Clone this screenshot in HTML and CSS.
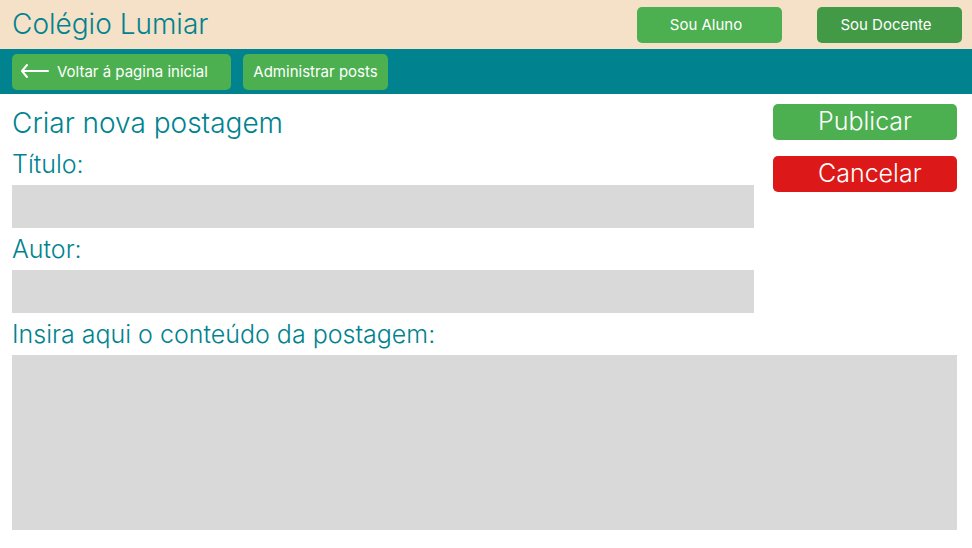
FILE: index.html
```html
<!DOCTYPE html>
<html lang="pt-BR">
<head>
<meta charset="utf-8">
<meta name="viewport" content="width=device-width, initial-scale=1">
<title>Colégio Lumiar</title>
<link rel="stylesheet" href="styles.css">
</head>
<body>
<header class="topbar">
  <span class="brand">Colégio Lumiar</span>
  <div class="roles">
    <button type="button" class="btn btn-role">Sou Aluno</button>
    <button type="button" class="btn btn-role btn-active">Sou Docente</button>
  </div>
</header>
<nav class="navbar">
  <a class="btn btn-back" href="#">
    <svg class="arrow" viewBox="0 0 30 16" aria-hidden="true"><path d="M28 8H2M7 2L2 8L7 14"/></svg>
    Voltar á pagina inicial
  </a>
  <a class="btn" href="#">Administrar posts</a>
</nav>
<main>
  <form class="editor">
    <div class="fields">
      <h1>Criar nova postagem</h1>
      <label for="titulo">Título:</label>
      <input id="titulo" type="text">
      <label for="autor">Autor:</label>
      <input id="autor" type="text">
    </div>
    <div class="actions">
      <button type="submit" class="btn btn-large">Publicar</button>
      <button type="button" class="btn btn-large btn-cancel">Cancelar</button>
    </div>
    <div class="content">
      <label for="conteudo">Insira aqui o conteúdo da postagem:</label>
      <textarea id="conteudo"></textarea>
    </div>
  </form>
</main>
</body>
</html>
```
FILE: styles.css
```css
* {
  box-sizing: border-box;
}

body {
  margin: 0;
  background: #fff;
  color: #00838f;
  font-family: Inter, "Liberation Sans", sans-serif;
  font-weight: 350;
}

.topbar {
  display: flex;
  align-items: center;
  justify-content: space-between;
  padding: 7px 10px 6px 12px;
  background: #f5e1c8;
}

.brand,
h1 {
  font-size: 28px;
  font-weight: 350;
  line-height: 34px;
}

.brand {
  padding-bottom: 2px;
}

.roles {
  display: flex;
  gap: 35px;
}

.btn {
  display: flex;
  align-items: center;
  justify-content: center;
  width: 145px;
  height: 36px;
  padding: 0 0 2px;
  border: 0;
  border-radius: 5px;
  background: #4caf50;
  color: #fff;
  font-family: inherit;
  font-size: 15px;
  font-weight: 400;
  text-decoration: none;
  cursor: pointer;
}

.btn-role {
  padding-right: 7px;
}

.btn-active {
  background: #439a46;
}

.navbar {
  display: flex;
  gap: 12px;
  padding: 5px 12px 4px;
  background: #00838f;
}

.btn-back {
  justify-content: flex-start;
  gap: 7px;
  width: 219px;
  padding-left: 8px;
}

.arrow {
  width: 30px;
  height: 16px;
  fill: none;
  stroke: #fff;
  stroke-width: 2;
  stroke-linecap: round;
  stroke-linejoin: round;
}

.editor {
  display: grid;
  grid-template-columns: 1fr 184px;
  column-gap: 19px;
  padding: 10px 15px 18px 12px;
}

.fields,
.actions,
.content {
  display: flex;
  flex-direction: column;
}

.actions {
  gap: 16px;
}

.content {
  grid-column: 1 / -1;
}

h1 {
  margin: 2px 0 9px;
}

label {
  margin-bottom: 6px;
  font-size: 25px;
  line-height: 30px;
}

input,
textarea {
  display: block;
  width: 100%;
  height: 43px;
  margin: 0 0 6px;
  padding: 8px;
  border: 0;
  border-radius: 0;
  background: #d9d9d9;
  color: inherit;
  font: inherit;
}

textarea {
  height: 175px;
  margin: 0;
  resize: none;
}

.btn-large {
  justify-content: flex-start;
  width: 100%;
  padding-left: 45px;
  font-size: 25px;
  font-weight: 350;
}

.btn-cancel {
  background: #dd1818;
}
```
